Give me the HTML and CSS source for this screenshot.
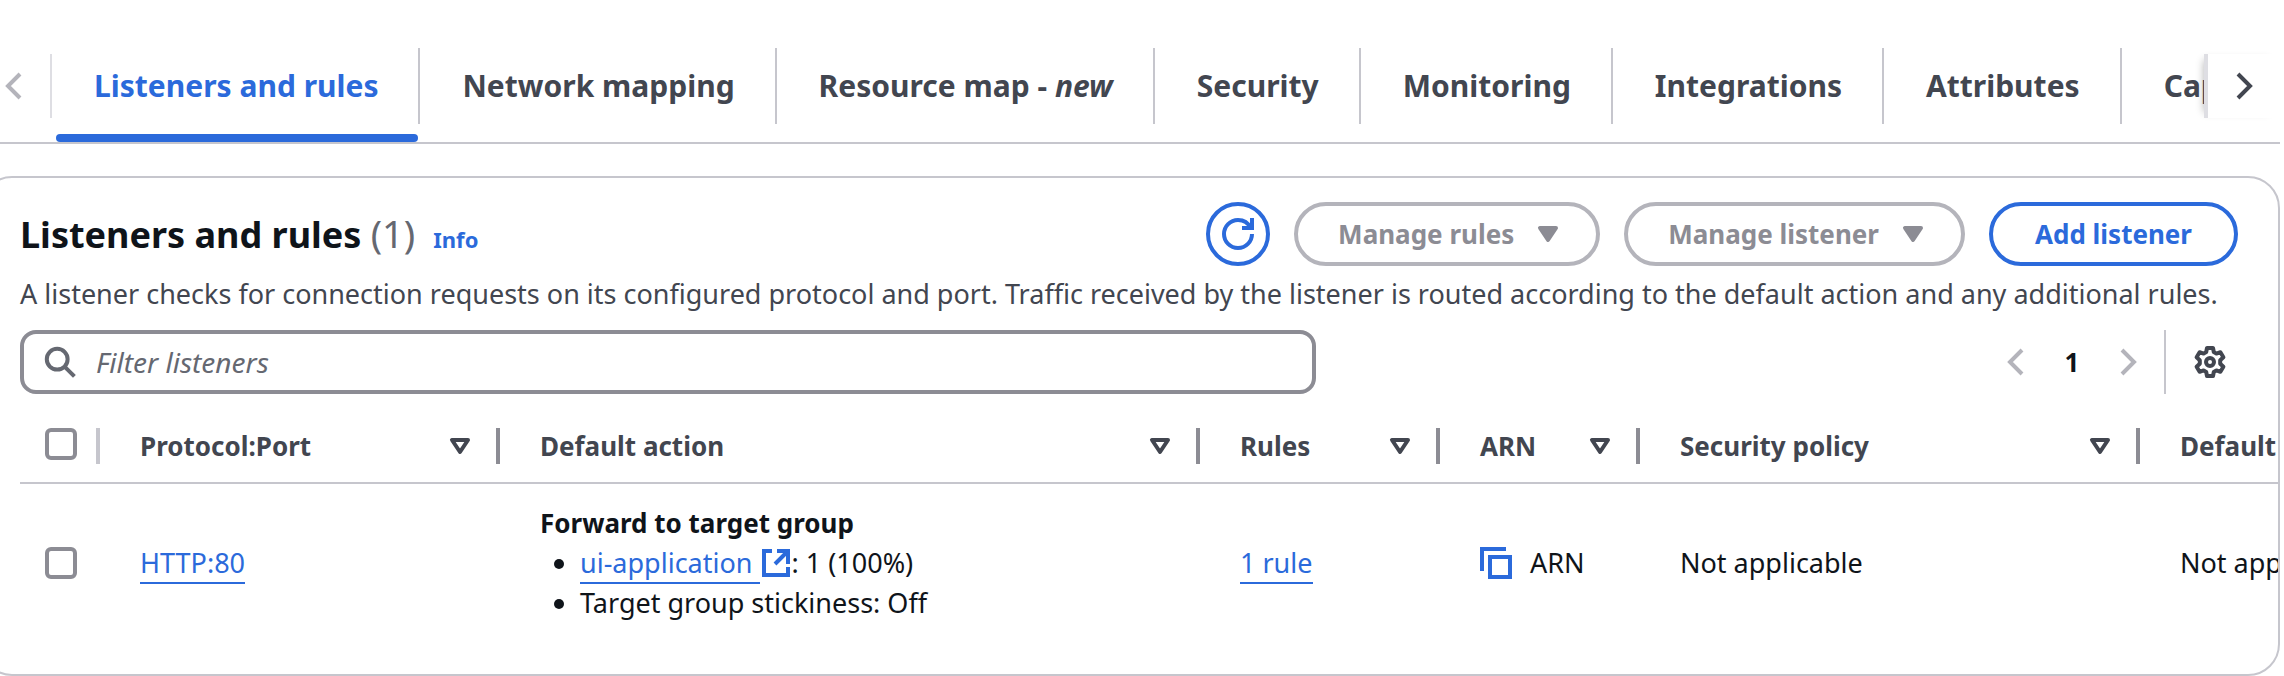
FILE: index.html
```html
<!DOCTYPE html>
<html lang="en">
<head>
<meta charset="utf-8">
<meta name="viewport" content="width=device-width, initial-scale=1">
<title>Listeners and rules</title>
<link rel="stylesheet" href="styles.css">
</head>
<body>
<nav class="tabs" aria-label="Load balancer details">
  <button class="tabs-scroll tabs-prev" type="button" aria-label="Scroll left" disabled>
    <svg class="icon" viewBox="0 0 16 16"><path d="M11 2 5 8l6 6"/></svg>
  </button>
  <div class="tabs-list" role="tablist">
    <button class="tab tab-active" type="button" role="tab" aria-selected="true">Listeners and rules</button>
    <button class="tab" type="button" role="tab">Network mapping</button>
    <button class="tab" type="button" role="tab">Resource map - <em>new</em></button>
    <button class="tab" type="button" role="tab">Security</button>
    <button class="tab" type="button" role="tab">Monitoring</button>
    <button class="tab" type="button" role="tab">Integrations</button>
    <button class="tab" type="button" role="tab">Attributes</button>
    <button class="tab" type="button" role="tab">Capacity</button>
  </div>
  <button class="tabs-scroll tabs-next" type="button" aria-label="Scroll right">
    <svg class="icon" viewBox="0 0 16 16"><path d="m5 2 6 6-6 6"/></svg>
  </button>
</nav>

<main class="panel">
  <header class="panel-header">
    <div class="title-group">
      <h2 class="title">Listeners and rules <span class="count">(1)</span></h2>
      <a class="info" href="#info">Info</a>
    </div>
    <div class="actions">
      <button class="btn btn-icon" type="button" aria-label="Refresh">
        <svg class="icon" viewBox="0 0 16 16"><path d="M15 8c0 3.870-3.130 7-7 7s-7-3.130-7-7 3.130-7 7-7c2.800 0 5.200 1.600 6.300 4"/><path d="M10 5h5V0"/></svg>
      </button>
      <button class="btn" type="button" disabled>Manage rules
        <svg class="icon icon-filled" viewBox="0 0 16 16"><path d="M4 5h8l-4 6z"/></svg>
      </button>
      <button class="btn" type="button" disabled>Manage listener
        <svg class="icon icon-filled" viewBox="0 0 16 16"><path d="M4 5h8l-4 6z"/></svg>
      </button>
      <button class="btn" type="button">Add listener</button>
    </div>
  </header>
  <p class="description">A listener checks for connection requests on its configured protocol and port. Traffic received by the listener is routed according to the default action and any additional rules.</p>

  <div class="tools">
    <label class="search">
      <svg class="icon" viewBox="0 0 16 16"><circle cx="6.600" cy="6.600" r="5.200"/><path d="m10.400 10.400 4.800 4.800"/></svg>
      <input class="search-input" type="search" placeholder="Filter listeners" aria-label="Filter listeners">
    </label>
    <div class="pager">
      <button class="pager-btn" type="button" aria-label="Previous page" disabled>
        <svg class="icon" viewBox="0 0 16 16"><path d="M11 2 5 8l6 6"/></svg>
      </button>
      <button class="pager-page" type="button" aria-current="page">1</button>
      <button class="pager-btn" type="button" aria-label="Next page" disabled>
        <svg class="icon" viewBox="0 0 16 16"><path d="m5 2 6 6-6 6"/></svg>
      </button>
      <button class="settings" type="button" aria-label="Preferences">
        <svg class="icon icon-gear" viewBox="0 0 16 16"><path d="M6.500 1h3l.4 2 1.300.8 2-.7 1.500 2.500L13.100 7.100v1.800l1.600 1.500-1.500 2.500-2-.7-1.300.8-.4 2h-3l-.4-2-1.300-.8-2 .7-1.500-2.500 1.600-1.500V7.100L1.300 5.600l1.500-2.500 2 .7L6.100 3z"/><circle cx="8" cy="8" r="2"/></svg>
      </button>
    </div>
  </div>

  <div class="table-wrap">
    <table class="table">
      <colgroup>
        <col class="col-select"><col class="col-port"><col class="col-action"><col class="col-rules"><col class="col-arn"><col class="col-policy"><col class="col-cert">
      </colgroup>
      <thead>
        <tr>
          <th class="select-cell"><div class="head"><input class="check" type="checkbox" aria-label="Select all listeners"></div></th>
          <th><div class="head">Protocol:Port<svg class="icon sort" viewBox="0 0 16 16"><path d="M4 5h8l-4 6z"/></svg></div></th>
          <th><div class="head">Default action<svg class="icon sort" viewBox="0 0 16 16"><path d="M4 5h8l-4 6z"/></svg></div></th>
          <th><div class="head">Rules<svg class="icon sort" viewBox="0 0 16 16"><path d="M4 5h8l-4 6z"/></svg></div></th>
          <th><div class="head">ARN<svg class="icon sort" viewBox="0 0 16 16"><path d="M4 5h8l-4 6z"/></svg></div></th>
          <th><div class="head">Security policy<svg class="icon sort" viewBox="0 0 16 16"><path d="M4 5h8l-4 6z"/></svg></div></th>
          <th><div class="head">Default SSL/TLS certificate</div></th>
        </tr>
      </thead>
      <tbody>
        <tr>
          <td class="select-cell"><input class="check" type="checkbox" aria-label="Select HTTP:80"></td>
          <td><a class="link" href="#http-80">HTTP:80</a></td>
          <td>
            <strong class="action-title">Forward to target group</strong>
            <ul class="targets">
              <li><a class="link" href="#ui-application">ui-application </a><svg class="icon icon-external" viewBox="0 0 14 14"><path d="M5 1H1v12h12V9"/><path d="M7.500 1H13v6.500M13 1 6.500 7.500"/></svg>: 1 (100%)</li>
              <li>Target group stickiness: Off</li>
            </ul>
          </td>
          <td><a class="link" href="#rules">1 rule</a></td>
          <td>
            <div class="copy">
              <button class="copy-btn" type="button" aria-label="Copy ARN">
                <svg class="icon" viewBox="0 0 16 16"><path d="M1 12V1h12"/><path d="M5 5h10v10H5z"/></svg>
              </button>
              <span>ARN</span>
            </div>
          </td>
          <td>Not applicable</td>
          <td>Not applicable</td>
        </tr>
      </tbody>
    </table>
  </div>
</main>
</body>
</html>
```
FILE: styles.css
```css
:root {
  --blue: #2b6adb;
  --ink: #0f141a;
  --text: #424650;
  --muted: #656871;
  --field: #8c8c94;
  --disabled: #b4b4bb;
  --line: #c6c6cd;
}

* { box-sizing: border-box; }

body {
  margin: 0;
  padding: 48px 4px 0 0;
  overflow-x: hidden;
  background: #fff;
  color: var(--ink);
  font: 400 27px/40px "Noto Sans", "Open Sans", sans-serif;
}

button {
  padding: 0;
  border: 0;
  background: none;
  color: inherit;
  font: inherit;
  white-space: nowrap;
}

.icon {
  flex: none;
  width: 32px;
  height: 32px;
  fill: none;
  stroke: currentColor;
  stroke-width: 2;
}

.tabs {
  display: flex;
  border-bottom: 2px solid var(--line);
}

.tabs-scroll {
  display: flex;
  flex: none;
  align-items: center;
  height: 64px;
  margin-top: 6px;
  color: var(--text);
}

.tabs-prev {
  justify-content: flex-end;
  width: 52px;
  padding-right: 20px;
  border-right: 2px solid #dedee3;
  color: var(--disabled);
}

.tabs-next {
  width: 76px;
  padding-left: 20px;
  border-left: 4px solid #dedee3;
  box-shadow: -6px 0 8px -6px rgba(0, 0, 0, 0.3);
}

.tabs-list {
  display: flex;
  flex: 1;
  min-width: 0;
  overflow: hidden;
}

.tab {
  position: relative;
  flex: none;
  height: 94px;
  padding: 0 42px 18px;
  color: var(--text);
  font-size: 30px;
  font-weight: 700;
}

.tab::before {
  content: "";
  position: absolute;
  top: 0;
  right: 0;
  bottom: 18px;
  border-right: 2px solid var(--line);
}

.tab-active { color: var(--blue); }

.tab-active::after {
  content: "";
  position: absolute;
  right: 2px;
  bottom: 0;
  left: 4px;
  height: 8px;
  border-radius: 4px;
  background: var(--blue);
}

.panel {
  margin: 32px 0 0 -20px;
  padding: 24px 0 32px 38px;
  border: 2px solid var(--line);
  border-radius: 32px;
}

.panel-header {
  display: flex;
  align-items: center;
  justify-content: space-between;
  gap: 24px;
  padding-right: 40px;
}

.title-group {
  display: flex;
  align-items: baseline;
  gap: 18px;
}

.title {
  margin: 0;
  font-size: 36px;
  font-weight: 700;
  line-height: 48px;
}

.count {
  color: var(--muted);
  font-size: 38px;
  font-weight: 400;
}

.info {
  color: var(--blue);
  font-size: 22px;
  font-weight: 700;
  text-decoration: none;
}

.actions {
  display: flex;
  gap: 24px;
}

.btn {
  display: flex;
  align-items: center;
  gap: 16px;
  height: 64px;
  padding: 0 42px;
  border: 4px solid var(--blue);
  border-radius: 32px;
  color: var(--blue);
  font-size: 26px;
  font-weight: 700;
}

.btn:disabled {
  padding: 0 32px 0 40px;
  gap: 18px;
  border-color: var(--disabled);
  color: var(--field);
}

.btn-icon {
  justify-content: center;
  width: 64px;
  padding: 0;
}

.icon-filled {
  fill: currentColor;
  stroke-linejoin: round;
}

.sort { stroke-linejoin: round; }

.description {
  margin: 8px 20px 16px 0;
  color: var(--text);
}

.tools {
  display: flex;
  justify-content: space-between;
  gap: 24px;
  padding-right: 52px;
}

.search {
  display: flex;
  flex: 0 1 1296px;
  align-items: center;
  gap: 20px;
  height: 64px;
  padding: 0 20px;
  border: 4px solid var(--field);
  border-radius: 16px;
  color: var(--muted);
}

.search-input {
  flex: 1;
  min-width: 0;
  padding: 0;
  border: 0;
  outline: 0;
  background: none;
  color: var(--ink);
  font: inherit;
  font-size: 28px;
}

.search-input::placeholder {
  color: var(--muted);
  font-style: italic;
  opacity: 1;
}

.pager {
  display: flex;
  align-items: center;
}

.pager-btn {
  display: flex;
  color: var(--disabled);
}

.pager-page {
  width: 80px;
  font-size: 26px;
  font-weight: 700;
}

.settings {
  display: flex;
  align-items: center;
  height: 64px;
  margin-left: 20px;
  padding-left: 28px;
  border-left: 2px solid var(--line);
  color: var(--text);
}

.icon-gear { stroke-linejoin: round; }

.table-wrap {
  margin-top: 16px;
  overflow: hidden;
}

.table {
  width: 2620px;
  border-collapse: separate;
  border-spacing: 0;
  table-layout: fixed;
}

.col-select { width: 80px; }
.col-port { width: 400px; }
.col-action { width: 700px; }
.col-rules { width: 240px; }
.col-arn { width: 200px; }
.col-policy { width: 500px; }
.col-cert { width: 500px; }

.table th {
  height: 74px;
  padding: 0;
  border-bottom: 2px solid var(--line);
  color: var(--text);
  font-size: 26px;
  font-weight: 700;
  text-align: left;
}

.head {
  display: flex;
  align-items: center;
  justify-content: space-between;
  height: 36px;
  padding: 0 20px 0 40px;
  border-right: 4px solid var(--field);
}

.table th:last-child .head { border-right: 0; }

.table .select-cell { padding-left: 25px; }

.select-cell .head {
  align-items: flex-start;
  padding: 0;
  border-color: var(--line);
}

.table td {
  height: 158px;
  padding: 0 0 0 40px;
}

.check {
  display: block;
  width: 32px;
  height: 32px;
  margin: 0;
  border: 4px solid var(--field);
  border-radius: 6px;
  appearance: none;
}

.action-title {
  display: block;
  font-size: 26px;
}

.link {
  padding-bottom: 1px;
  border-bottom: 2px solid var(--blue);
  color: var(--blue);
  text-decoration: none;
  white-space: pre;
}

.targets {
  margin: 0;
  padding-left: 40px;
}

.icon-external {
  width: 28px;
  height: 28px;
  margin: 0 2px;
  color: var(--blue);
  vertical-align: -4px;
}

.copy {
  display: flex;
  align-items: center;
  gap: 18px;
}

.copy-btn {
  display: flex;
  color: var(--blue);
}
```
